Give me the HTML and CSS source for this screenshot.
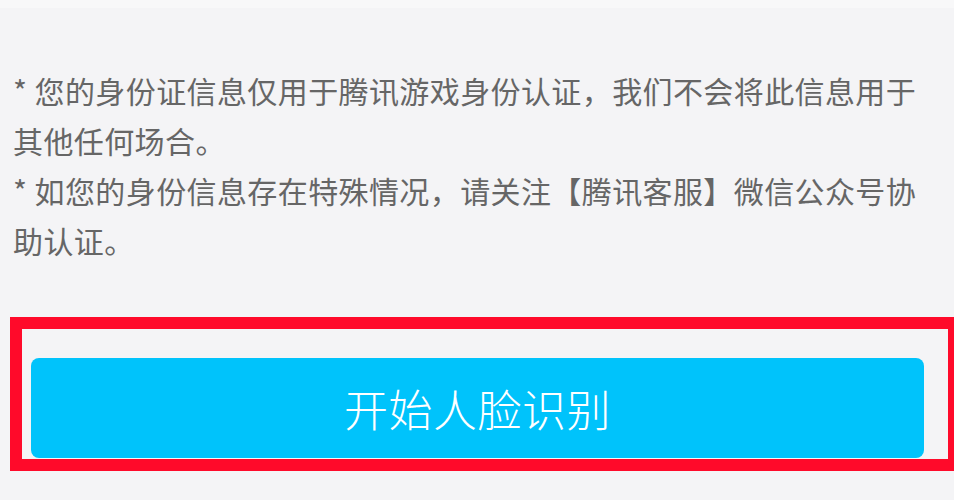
FILE: index.html
```html
<!DOCTYPE html>
<html lang="zh-CN">
<head>
    <meta charset="UTF-8">
    <meta name="viewport" content="width=device-width, initial-scale=1.0">
    <title>身份认证</title>
    <link rel="stylesheet" href="styles.css">
</head>
<body>

<div class="page">
    <div class="notes">
        <p>* 您的身份证信息仅用于腾讯游戏身份认证，我们不会将此信息用于其他任何场合。</p>
        <p>* 如您的身份信息存在特殊情况，请关注【腾讯客服】微信公众号协助认证。</p>
    </div>

    <button class="face-btn" type="button">开始人脸识别</button>

    <!-- 标注框 -->
    <div class="highlight"></div>
</div>

</body>
</html>
```

FILE: styles.css
```css
html, body {
    margin: 0;
    padding: 0;
    overflow: hidden;
}
body {
    font-family: "Noto Sans CJK SC", "Noto Sans", sans-serif;
    background-color: #f4f4f6;
}
.page {
    position: relative;
    height: 500px;
    border-top: 8px solid #f8f8f9;
    box-sizing: border-box;
}
.notes {
    width: 925px;
    padding: 57px 0 0 13px;
    color: #666;
    font-size: 30px;
    line-height: 50px;
    letter-spacing: 0.4px;
}
.notes p {
    margin: 0;
}
.face-btn {
    display: block;
    width: 893px;
    height: 100px;
    margin: 93px 0 0 31px;
    padding: 0;
    border: none;
    border-radius: 8px;
    background-color: #00c3fb;
    color: #fff;
    font-family: "Noto Sans CJK SC", "Noto Sans", sans-serif;
    font-size: 44px;
    font-weight: 300;
    letter-spacing: 0.5px;
    cursor: pointer;
}
.highlight {
    position: absolute;
    left: 10px;
    top: 309px;
    width: 926px;
    height: 130px;
    border: 12px solid #ff0a2a;
    pointer-events: none;
}
```
